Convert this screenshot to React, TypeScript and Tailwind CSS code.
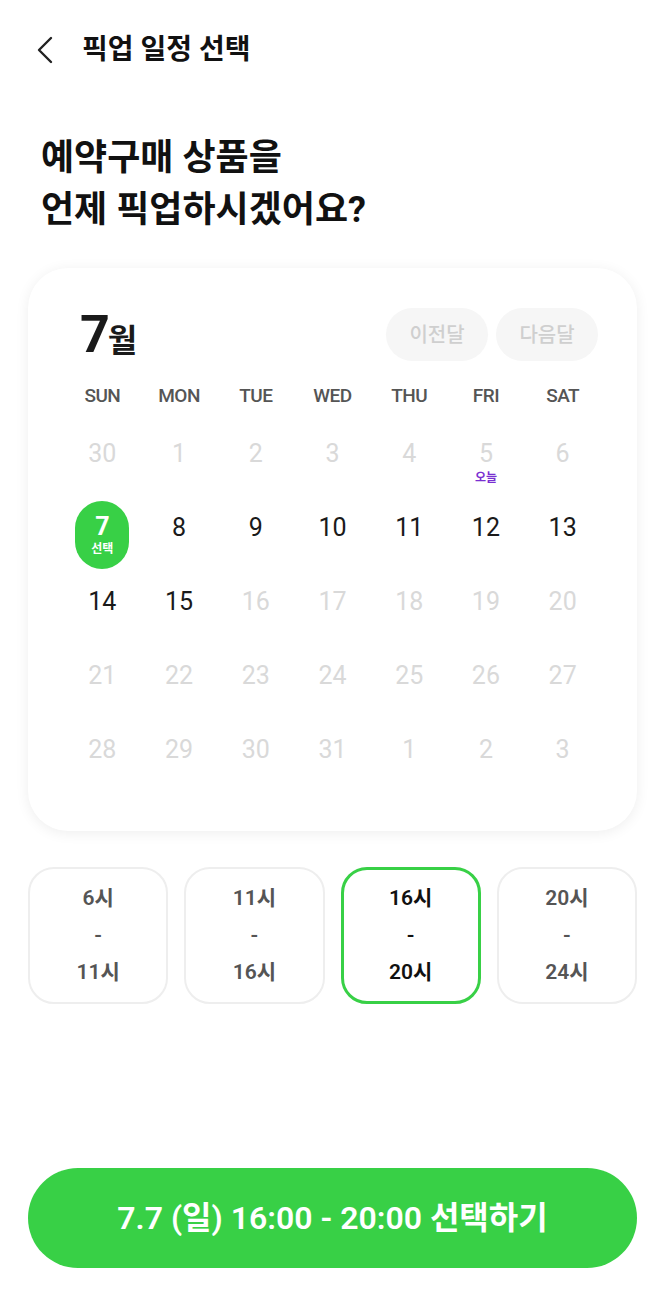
import React, { useState } from "react";

const FONT = "font-['Roboto','Noto_Sans_CJK_KR',sans-serif]";

const WEEKDAYS = ["SUN", "MON", "TUE", "WED", "THU", "FRI", "SAT"];

// 7월 달력: 앞뒤 달 날짜 포함, 선택 가능한 날만 active
const DAYS: { n: number; active: boolean; today?: boolean }[] = [
  { n: 30, active: false },
  { n: 1, active: false },
  { n: 2, active: false },
  { n: 3, active: false },
  { n: 4, active: false },
  { n: 5, active: false, today: true },
  { n: 6, active: false },
  ...[7, 8, 9, 10, 11, 12, 13, 14, 15].map((n) => ({ n, active: true })),
  ...[16, 17, 18, 19, 20, 21, 22, 23, 24, 25, 26, 27, 28, 29, 30, 31].map((n) => ({ n, active: false })),
  { n: 1, active: false },
  { n: 2, active: false },
  { n: 3, active: false },
];

const SLOTS = [
  { from: "6시", to: "11시" },
  { from: "11시", to: "16시" },
  { from: "16시", to: "20시" },
  { from: "20시", to: "24시" },
];

export default function App() {
  const [selectedDay, setSelectedDay] = useState(7);
  const [slot, setSlot] = useState(2);

  return (
    <div className={`${FONT} w-[665px] h-[1300px] bg-white flex flex-col px-[28px]`}>
      {/* Header */}
      <div className="flex items-center h-[50px] mt-[25px] pl-[8px]">
        <svg width="18" height="28" viewBox="0 0 18 28" fill="none" className="mr-[28px]">
          <path d="M15 2L3 14l12 12" stroke="#222" strokeWidth="2.4" strokeLinecap="round" strokeLinejoin="round" />
        </svg>
        <h1 className="text-[28px] font-bold text-[#111]">픽업 일정 선택</h1>
      </div>

      {/* Title */}
      <h2 className="mt-[57px] pl-[13px] text-[36px] leading-[52px] font-bold text-[#111]">
        예약구매 상품을
        <br />
        언제 픽업하시겠어요?
      </h2>

      {/* Calendar card */}
      <div className="mt-[32px] rounded-[40px] bg-white shadow-[0_2px_14px_rgba(0,0,0,0.07)] px-[36px] pt-[40px] pb-[40px]">
        <div className="flex items-center justify-between pl-[16px] pr-[3px]">
          <div className="flex items-baseline text-[#1a1a1a] font-bold">
            <span className="text-[52px] leading-none tracking-[-2px]">7</span>
            <span className="text-[32px] leading-none">월</span>
          </div>
          <div className="flex gap-[8px]">
            <button className="w-[102px] h-[53px] rounded-full bg-[#f6f6f6] text-[#cfcfcf] text-[20px] font-medium">
              이전달
            </button>
            <button className="w-[102px] h-[53px] rounded-full bg-[#f6f6f6] text-[#cfcfcf] text-[20px] font-medium">
              다음달
            </button>
          </div>
        </div>

        <div className="grid grid-cols-7 mt-[20px]">
          {WEEKDAYS.map((d) => (
            <div key={d} className="text-center text-[19px] font-medium text-[#555] h-[30px] leading-[30px] tracking-[-0.5px]">
              {d}
            </div>
          ))}
        </div>

        <div className="grid grid-cols-7 mt-[16px] gap-y-[6px]">
          {DAYS.map((d, i) => {
            const selected = d.active && d.n === selectedDay;
            return (
              <div key={i} className="flex justify-center h-[68px]">
                {selected ? (
                  <div className="w-[54px] h-[68px] rounded-full bg-[#38d046] flex flex-col items-center justify-center text-white">
                    <span className="text-[25px] font-bold leading-[28px]">{d.n}</span>
                    <span className="text-[12px] font-bold leading-[16px]">선택</span>
                  </div>
                ) : (
                  <button
                    onClick={() => d.active && setSelectedDay(d.n)}
                    className={`flex flex-col items-center pt-[12px] ${d.active ? "text-[#1a1a1a]" : "text-[#d9d9d9]"}`}
                  >
                    <span className="text-[25px] leading-[30px]">{d.n}</span>
                    {d.today && <span className="text-[12px] font-bold leading-[14px] text-[#7a2fd1] mt-[2px]">오늘</span>}
                  </button>
                )}
              </div>
            );
          })}
        </div>
      </div>

      {/* Time slots */}
      <div className="grid grid-cols-4 gap-[16px] mt-[36px]">
        {SLOTS.map((s, i) => {
          const on = i === slot;
          return (
            <button
              key={i}
              onClick={() => setSlot(i)}
              className={`h-[137px] rounded-[26px] flex flex-col items-center justify-center text-[21px] font-semibold leading-[37px] ${
                on ? "border-[3px] border-[#38d046] text-[#111]" : "border-2 border-[#eeeeee] text-[#555]"
              }`}
            >
              <span>{s.from}</span>
              <span>-</span>
              <span>{s.to}</span>
            </button>
          );
        })}
      </div>

      <div className="flex-1" />

      {/* CTA */}
      <button className="mb-[32px] h-[100px] rounded-full bg-[#38d046] text-white text-[32px] font-semibold">
        7.7 (일) 16:00 - 20:00 선택하기
      </button>
    </div>
  );
}
